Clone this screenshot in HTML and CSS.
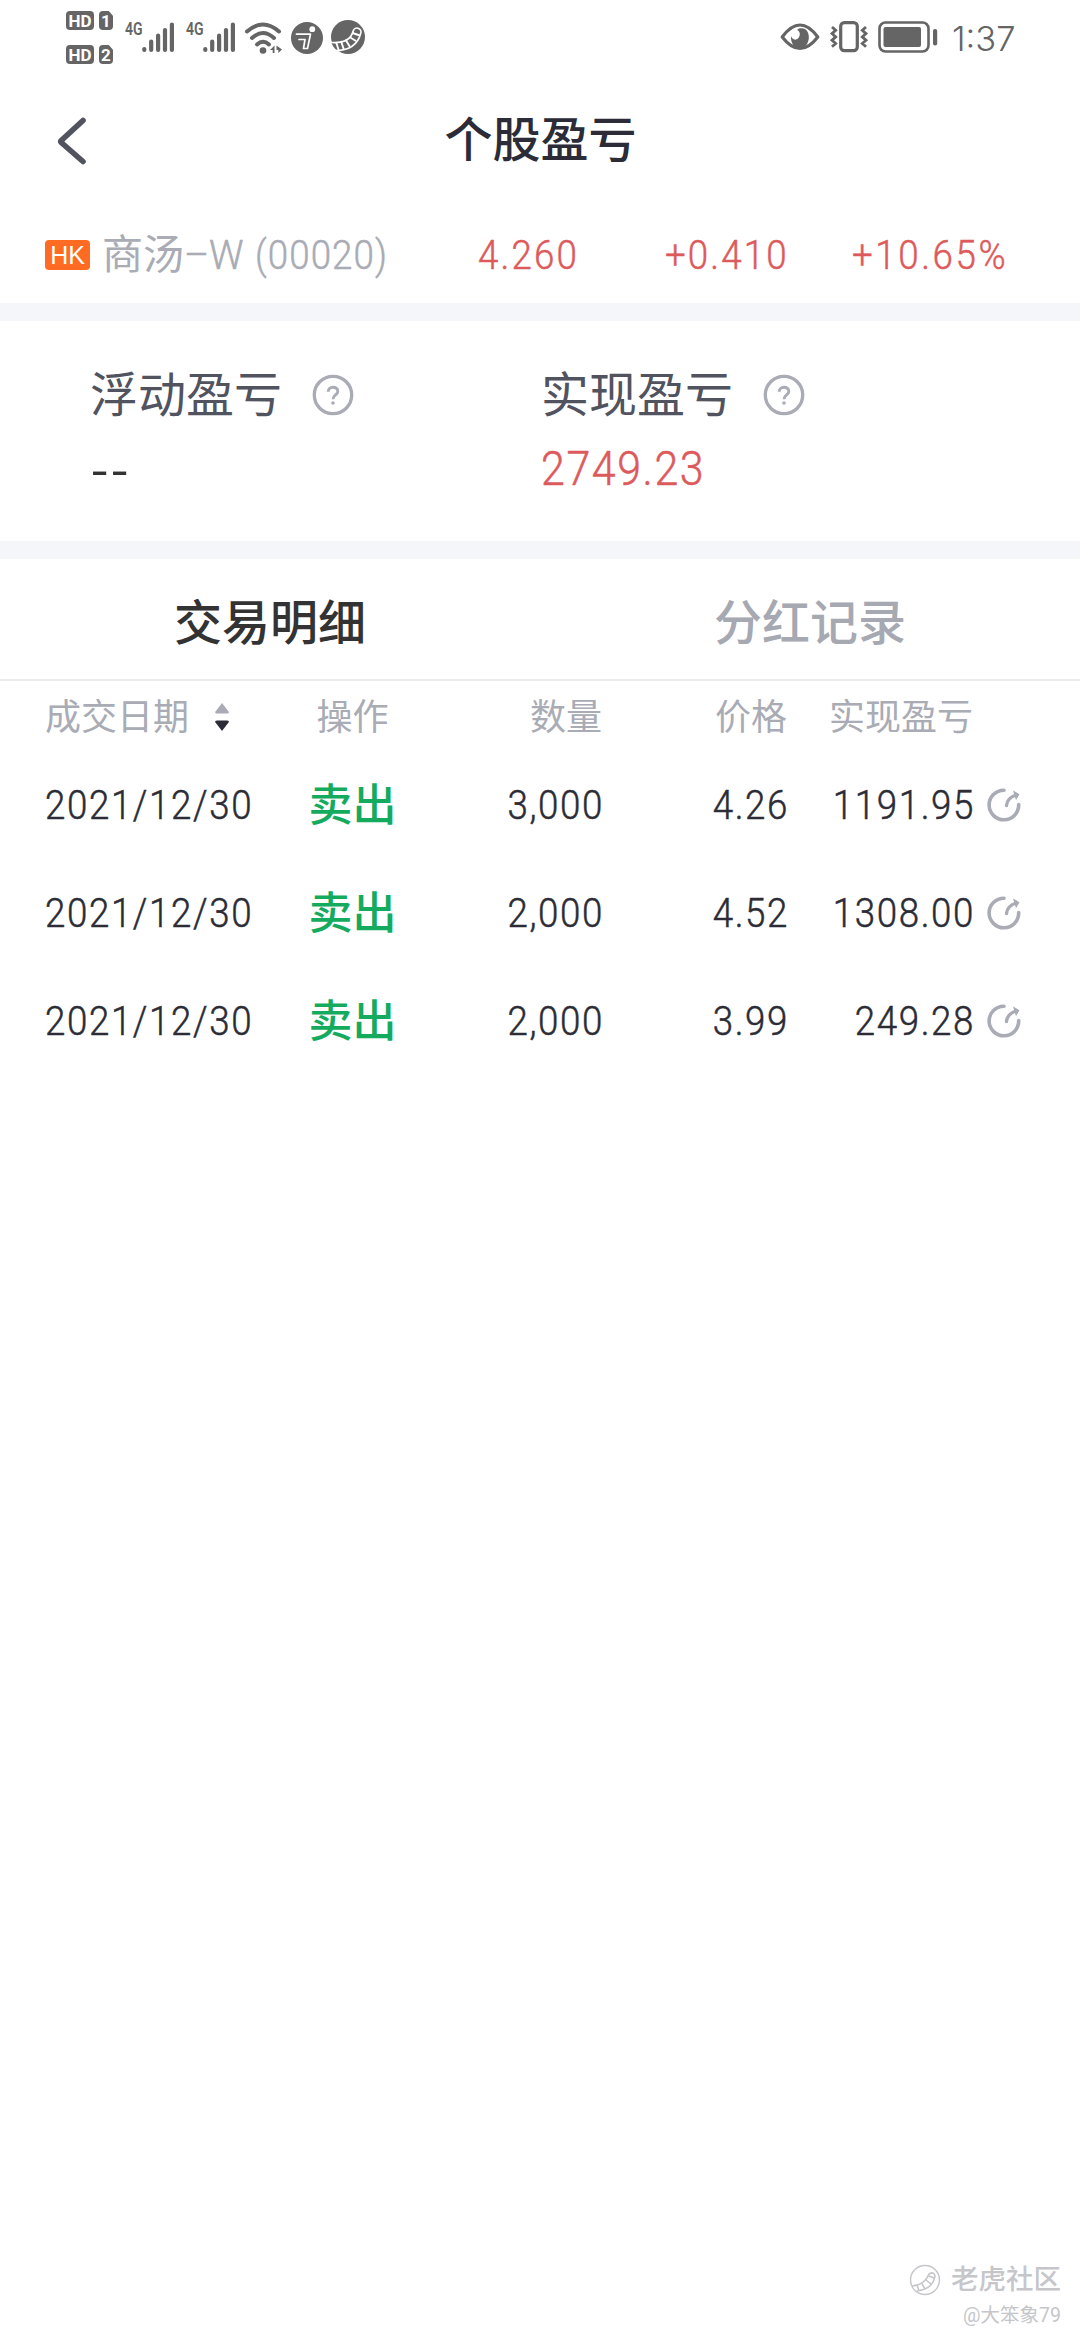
FILE: index.html
```html
<!DOCTYPE html>
<html lang="zh-CN">
<head>
<meta charset="utf-8">
<title>个股盈亏</title>
<link rel="stylesheet" href="styles.css">
</head>
<body>
<svg class="defs" width="0" height="0">
  <symbol id="signal" viewBox="0 0 34 32">
    <path d="M3.3 29v-1M10.2 29v-8.500M17.100 29v-14.500M24 29v-20M30.900 29v-25.500" fill="none" stroke="#656565" stroke-width="4.200" stroke-linecap="round"/>
  </symbol>
  <symbol id="share" viewBox="0 0 34 34">
    <path d="M17 2.200A14.800 14.800 0 1 0 31.700 16.500" fill="none" stroke="#a9abb5" stroke-width="3.600" stroke-linecap="round"/>
    <path d="M19.500 17.500C20 12.500 23 9 29 7" fill="none" stroke="#a9abb5" stroke-width="3.400" stroke-linecap="round"/>
    <path d="M26 2.500L32.500 6.200L29 12.200Z" fill="#a9abb5"/>
  </symbol>
  <symbol id="help" viewBox="0 0 42 42">
    <circle cx="21" cy="21" r="18.700" fill="none" stroke="#a9abb5" stroke-width="3.300"/>
    <path d="M16.200 17.800C16.200 11.800 25.800 11.800 25.800 17.400C25.800 21 21 20.800 21 25.200" fill="none" stroke="#a9abb5" stroke-width="2.900"/>
    <circle cx="21" cy="29" r="1.800" fill="#a9abb5"/>
  </symbol>
</svg>

<header class="status">
  <div class="hd-group">
    <div class="hd-row"><span class="hd">HD</span><span class="sim">1</span></div>
    <div class="hd-row"><span class="hd">HD</span><span class="sim">2</span></div>
  </div>
  <div class="net"><span class="net-type">4G</span><svg width="34" height="32"><use href="#signal"/></svg></div>
  <div class="net"><span class="net-type">4G</span><svg width="34" height="32"><use href="#signal"/></svg></div>
  <svg class="wifi" width="40" height="34" viewBox="0 0 40 34">
    <g fill="none" stroke="#656565" stroke-width="4" stroke-linecap="round">
      <path d="M3 10.500Q19 -3.500 35 10.500"/>
      <path d="M8 17Q19 7 30 17"/>
      <path d="M13 23.500Q19 18 25 23.500"/>
    </g>
    <circle cx="19" cy="29.500" r="3.300" fill="#656565"/>
    <path d="M26 29l4.500-4.500v7.500h-1.800v-3zM32.500 24.500l5.500 4-3.700 3.500v-3h-1.800z" fill="#656565"/>
  </svg>
  <svg class="runner" width="34" height="34" viewBox="0 0 34 34">
    <circle cx="17" cy="17" r="16" fill="#656565"/>
    <circle cx="22.300" cy="8.200" r="2.900" fill="#fff"/>
    <path d="M6.500 13.200H20.500L17.500 27.500H13.500L15 18.500H9" fill="none" stroke="#fff" stroke-width="1.700" stroke-linejoin="round" stroke-linecap="round"/>
  </svg>
  <svg class="tiger" width="36" height="36" viewBox="0 0 36 36">
    <clipPath id="disc"><circle cx="18" cy="18" r="17.500"/></clipPath>
    <circle cx="18" cy="18" r="17" fill="#656565"/>
    <g clip-path="url(#disc)">
      <path d="M1 27.500Q23 29 27 13" fill="none" stroke="#fff" stroke-width="9.500" stroke-linecap="round"/>
      <path d="M1 27.500Q23 29 27 13" fill="none" stroke="#656565" stroke-width="6.300" stroke-linecap="round"/>
      <path d="M6 23L9 32M11 22L14 31M15.500 20.500L20 28M19.500 18L26 22M22.500 14L30 16.500" stroke="#fff" stroke-width="1.900"/>
    </g>
  </svg>
  <div class="status-right">
    <svg width="40" height="28" viewBox="0 0 40 28">
      <path d="M2.200 14Q20 -10 37.800 14Q20 37 2.200 14Z" fill="none" stroke="#656565" stroke-width="3.200" stroke-linejoin="round"/>
      <path d="M19 5.500C32 2 32 25 20 25C14 25 10.500 20 11 13C12 16 15 18 18 15.500C21 12.500 20 8 17 7Z" fill="#656565"/>
    </svg>
    <svg width="40" height="34" viewBox="0 0 40 34">
      <rect x="11.700" y="2.700" width="16.600" height="28" rx="3.600" fill="none" stroke="#656565" stroke-width="3.200"/>
      <path d="M3 7l3.700 3.300-3.700 3.300 3.700 3.300-3.700 3.300 3.700 3.300-3.700 3.300M37 7l-3.700 3.300 3.700 3.300-3.700 3.300 3.700 3.300-3.700 3.300 3.700 3.300" fill="none" stroke="#656565" stroke-width="2.800"/>
    </svg>
    <svg width="60" height="34" viewBox="0 0 60 34">
      <rect x="1.500" y="2.500" width="49" height="29" rx="6" fill="none" stroke="#656565" stroke-width="2.600"/>
      <rect x="5.500" y="7" width="37.500" height="20" rx="2" fill="#656565"/>
      <rect x="55" y="9" width="4.200" height="16.500" rx="2" fill="#656565"/>
    </svg>
    <span class="clock">1:37</span>
  </div>
</header>

<nav class="titlebar">
  <svg class="back" width="32" height="50" viewBox="0 0 32 50"><path d="M28 4.500L6.300 24.500Q5.300 25.500 6.300 26.500L28 45.500" fill="none" stroke="#51535f" stroke-width="5.600" stroke-linecap="round"/></svg>
  <h1 class="title">个股盈亏</h1>
</nav>

<section class="quote">
  <span class="market">HK</span>
  <span class="name">商汤</span><span class="suffix">–W</span><span class="code num">(00020)</span>
  <span class="price num">4.260</span>
  <span class="change num">+0.410</span>
  <span class="percent num">+10.65%</span>
</section>

<section class="summary">
  <div class="metric">
    <div class="metric-label"><span>浮动盈亏</span><svg width="42" height="42"><use href="#help"/></svg></div>
    <div class="metric-value"><span class="empty">--</span></div>
  </div>
  <div class="metric">
    <div class="metric-label"><span>实现盈亏</span><svg width="42" height="42"><use href="#help"/></svg></div>
    <div class="metric-value"><span class="num total">2749.23</span></div>
  </div>
</section>

<div class="tabs">
  <div class="tab active">交易明细</div>
  <div class="tab">分红记录</div>
</div>

<main class="table">
  <div class="row head">
    <div class="date">成交日期<svg class="sort" width="16" height="30" viewBox="0 0 16 30"><path d="M8 1L14.500 9.500Q15.500 11.500 13 11.500H3Q.5 11.500 1.500 9.500Z" fill="#a9abb5"/><path d="M8 29L14.500 20.500Q15.500 18.500 13 18.500H3Q.5 18.500 1.500 20.500Z" fill="#2b2c38"/></svg></div>
    <div class="side">操作</div><div class="cell">数量</div><div class="cell">价格</div><div class="cell">实现盈亏</div>
  </div>
  <div class="row">
    <div class="date"><span class="num">2021/12/30</span></div><div class="side sell">卖出</div>
    <div class="cell num">3,000</div><div class="cell num">4.26</div><div class="cell num">1191.95</div>
    <svg class="share" width="34" height="34"><use href="#share"/></svg>
  </div>
  <div class="row">
    <div class="date"><span class="num">2021/12/30</span></div><div class="side sell">卖出</div>
    <div class="cell num">2,000</div><div class="cell num">4.52</div><div class="cell num">1308.00</div>
    <svg class="share" width="34" height="34"><use href="#share"/></svg>
  </div>
  <div class="row">
    <div class="date"><span class="num">2021/12/30</span></div><div class="side sell">卖出</div>
    <div class="cell num">2,000</div><div class="cell num">3.99</div><div class="cell num">249.28</div>
    <svg class="share" width="34" height="34"><use href="#share"/></svg>
  </div>
</main>

<footer class="watermark">
  <div class="brand">
    <svg width="32" height="32" viewBox="0 0 32 32" fill="none" stroke="#c6c6ca">
      <circle cx="16" cy="16" r="14.500" stroke-width="1.400"/>
      <path d="M3 22Q16 21 20 10Q25 7 26 12Q24 25 8 27M8 21l2 6M13 20l3 5M17 16l5 4M20 12l5 2" stroke-width="1.600"/>
    </svg>
    <span>老虎社区</span>
  </div>
  <div class="author">@大笨象79</div>
</footer>
</body>
</html>
```
FILE: styles.css
```css
* { box-sizing: border-box; }

body {
  margin: 0;
  width: 1080px;
  height: 2340px;
  display: flex;
  flex-direction: column;
  background: #fff;
  color: #2b2c35;
  font-family: Roboto, "Noto Sans CJK SC", sans-serif;
  overflow: hidden;
}

svg { display: block; flex: none; }
.defs { position: absolute; }

.num {
  font-family: Roboto, sans-serif;
  font-weight: 300;
  font-size: 41.5px;
  line-height: 60px;
  letter-spacing: 1.8px;
  display: inline-block;
  transform: scaleX(.885);
  transform-origin: left center;
  white-space: nowrap;
  -webkit-text-stroke: .5px currentColor;
}

/* Status bar */
.status {
  height: 78px;
  padding-left: 66px;
  display: flex;
  align-items: flex-start;
  color: #656565;
}
.hd-group { padding-top: 11px; display: flex; flex-direction: column; gap: 15px; width: 59px; }
.hd-row { display: flex; gap: 5px; height: 19px; }
.hd, .sim {
  background: #656565;
  color: #fff;
  font-weight: 700;
  font-size: 17px;
  line-height: 20px;
  text-align: center;
  border-radius: 4px;
}
.hd { width: 28px; }
.sim { width: 14px; clip-path: polygon(0 0, 70% 0, 100% 25%, 100% 100%, 0 100%); }
.net { display: flex; width: 61px; }
.net-type {
  width: 16px;
  margin-top: 20px;
  font-size: 19px;
  line-height: 18px;
  font-weight: 600;
  transform: scaleX(.74);
  transform-origin: left center;
}
.net svg { margin-top: 21px; }
.wifi { margin: 21px 0 0 -3px; }
.runner { margin: 21px 0 0 6px; }
.tiger { margin: 19px 0 0 6px; }
.status-right {
  margin-left: auto;
  margin-right: 65px;
  height: 74px;
  display: flex;
  align-items: center;
}
.status-right svg + svg { margin-left: 9px; }
.clock { margin: 3px 0 0 14px; font: 300 34.5px/40px Inter, sans-serif; width: 63px; white-space: nowrap; }

/* Title */
.titlebar { height: 132px; display: flex; padding: 37px 55px 0; }
.back { margin-top: 1px; }
.title {
  flex: 1;
  margin: 2px 31px 0 0;
  text-align: center;
  font-size: 48px;
  line-height: 48px;
  font-weight: 500;
  color: #2b2c38;
}

/* Quote line */
.quote {
  height: 111px;
  padding: 0 0 3px 45px;
  border-bottom: 18px solid #f5f6f9;
  display: flex;
  align-items: center;
  color: #a9abb5;
}
.market {
  width: 45px;
  height: 30px;
  border-radius: 4px;
  background: #ff6b22;
  color: #fff;
  font: 400 25px/30px "Liberation Sans", sans-serif;
  text-align: center;
}
.name { margin-left: 12px; font-size: 41px; line-height: 60px; font-weight: 400; }
.suffix { width: 71px; font-size: 41px; line-height: 60px; font-weight: 300; -webkit-text-stroke: .5px currentColor; white-space: nowrap; transform: scaleX(.94); transform-origin: left center; }
.price, .change, .percent { color: #dd5a5c; letter-spacing: 2.4px; }
.code { width: 223px; letter-spacing: 1.2px; }
.price { width: 187px; }
.change { width: 187px; }
.percent { letter-spacing: 2.9px; }

/* Profit summary */
.summary {
  height: 238px;
  padding: 44px 0 0 90px;
  border-bottom: 18px solid #f5f6f9;
  display: flex;
}
.metric { width: 451px; }
.metric-label {
  display: flex;
  align-items: center;
  gap: 30px;
  height: 60px;
  font-size: 48px;
  line-height: 60px;
  color: #51535f;
}
.metric-label span { margin-top: 1px; }
.metric-value { height: 60px; margin-top: 14px; }
.total { font-size: 48.5px; color: #dd5a5c; }
.empty {
  display: inline-block;
  margin: 2px 0 0 2px;
  font-size: 46px;
  line-height: 60px;
  letter-spacing: 4px;
  color: #333;
  transform: scaleX(1.2);
  transform-origin: left center;
}

/* Tabs */
.tabs { height: 122px; display: flex; border-bottom: 2px solid #ebebeb; }
.tab {
  flex: 1;
  padding-top: 9px;
  text-align: center;
  font-size: 48px;
  line-height: 111px;
  font-weight: 500;
  color: #a6a8b2;
}
.tab.active { color: #333; }

/* Trades */
.row {
  display: grid;
  grid-template-columns: 260px 95px 202px 185px 186px 36px;
  align-items: center;
  padding-left: 45px;
  height: 108px;
}
.head { height: 70px; padding-top: 4px; font-size: 36px; line-height: 60px; color: #a9abb5; }
.date { display: flex; align-items: center; }
.sort { margin: -2px 0 0 25px; }
.side { text-align: center; white-space: nowrap; }
.sell { margin-top: 2px; font-size: 44px; line-height: 60px; font-weight: 500; color: #15ab5f; }
.cell { text-align: right; transform-origin: right center; }
.cell.num { margin-right: -2px; }
.share { margin-left: 14px; }

/* Watermark */
.watermark {
  margin-top: auto;
  padding: 0 19px 11px 0;
  display: flex;
  flex-direction: column;
  align-items: flex-end;
  color: #c6c6ca;
}
.brand { display: flex; align-items: center; gap: 10px; font-size: 27.5px; line-height: 34px; font-weight: 500; }
.author { margin-top: 6px; font-size: 19.5px; line-height: 26px; }
```
